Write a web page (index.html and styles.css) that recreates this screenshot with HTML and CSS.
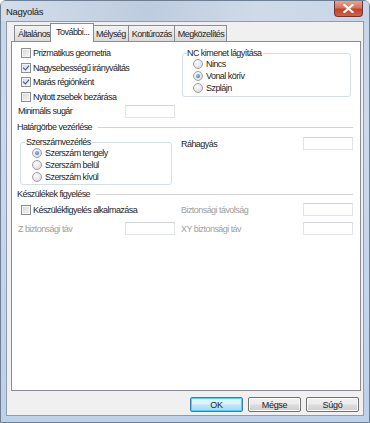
FILE: index.html
```html
<!DOCTYPE html>
<html lang="hu">
<head>
  <meta charset="UTF-8" />
  <title>Nagyolás</title>
  <link rel="stylesheet" href="styles.css">
</head>
<body>
  <div class="window">
    <div class="titlebar">
      <span class="title">Nagyolás</span>
      <div class="close">
        <svg width="11" height="9" viewBox="0 0 11 9">
          <path d="M1.5 1 L9.5 8 M9.5 1 L1.5 8" stroke="#fff" stroke-width="2.2" stroke-linecap="square"/>
        </svg>
      </div>
    </div>

    <div class="client">
      <!-- Tabs -->
      <div class="tabs">
        <div class="tab">Általános</div>
        <div class="tab active">További...</div>
        <div class="tab">Mélység</div>
        <div class="tab">Kontúrozás</div>
        <div class="tab">Megközelítés</div>
      </div>

      <div class="panel">
        <div class="section top">
          <div class="col">
            <label class="check"><span class="cb"></span>Prizmatikus geometria</label>
            <label class="check"><span class="cb on"></span>Nagysebességű irányváltás</label>
            <label class="check"><span class="cb on"></span>Marás régiónként</label>
            <label class="check"><span class="cb"></span>Nyitott zsebek bezárása</label>
            <div class="field"><span>Minimális sugár</span><span class="input"></span></div>
          </div>
          <fieldset class="group nc">
            <legend>NC kimenet lágyítása</legend>
            <label class="radio"><span class="rb"></span>Nincs</label>
            <label class="radio"><span class="rb on"></span>Vonal körív</label>
            <label class="radio"><span class="rb"></span>Szplájn</label>
          </fieldset>
        </div>

        <div class="sep"><span>Határgörbe vezérlése</span></div>

        <div class="section mid">
          <fieldset class="group tool">
            <legend>Szerszámvezérlés</legend>
            <label class="radio"><span class="rb on"></span>Szerszám tengely</label>
            <label class="radio"><span class="rb"></span>Szerszám belül</label>
            <label class="radio"><span class="rb"></span>Szerszám kívül</label>
          </fieldset>
          <div class="field right"><span>Ráhagyás</span><span class="input"></span></div>
        </div>

        <div class="sep"><span>Készülékek figyelése</span></div>

        <div class="section fix">
          <label class="check"><span class="cb"></span>Készülékfigyelés alkalmazása</label>
          <div class="field right off"><span>Biztonsági távolság</span><span class="input"></span></div>
          <div class="field off"><span>Z biztonsági táv</span><span class="input"></span></div>
          <div class="field right off"><span>XY biztonsági táv</span><span class="input"></span></div>
        </div>
      </div>

      <div class="buttons">
        <button class="default">OK</button>
        <button>Mégse</button>
        <button>Súgó</button>
      </div>
    </div>
  </div>
</body>
</html>
```

FILE: styles.css
```css
body {
  margin: 0;
  font-family: "Liberation Sans", Arial, sans-serif;
  font-size: 9px;
  letter-spacing: -0.55px;
  color: #262626;
}

.window {
  width: 370px;
  height: 423px;
  box-sizing: border-box;
  padding: 20px 5px 6px 5px;
  background: linear-gradient(to bottom, #c6d4e6 0%, #cad9ec 30%, #bcd1ea 100%);
  border: 1px solid #6f7f93;
  border-radius: 6px 6px 0 0;
  position: relative;
}

.titlebar {
  position: absolute;
  top: 0;
  left: 0;
  right: 0;
  height: 20px;
  background: linear-gradient(90deg, rgba(220,228,238,0.6), rgba(180,196,216,0.5) 40%, rgba(214,222,234,0.6) 70%, rgba(200,214,232,0.6));
}

.title {
  position: absolute;
  left: 5px;
  top: 5px;
  font-size: 9.5px;
  letter-spacing: -0.3px;
  color: #1a1a1a;
}

.close {
  position: absolute;
  right: 6px;
  top: 0;
  width: 29px;
  height: 16px;
  border: 1px solid #6b3a38;
  border-top: none;
  border-radius: 0 0 4px 4px;
  background: linear-gradient(to bottom, #e8a493 0%, #d7735b 45%, #c2412a 55%, #d0634a 100%);
  display: flex;
  align-items: center;
  justify-content: center;
  box-sizing: border-box;
}

.client {
  height: 100%;
  box-sizing: border-box;
  background: #f0f0f0;
  border: 1px solid #8e9cae;
  display: flex;
  flex-direction: column;
}

/* tabs */
.tabs {
  display: flex;
  height: 18px;
  margin-top: 1px;
  padding-left: 7px;
  position: relative;
  z-index: 1;
}

.tab {
  margin-top: 2px;
  height: 16px;
  box-sizing: border-box;
  padding: 3px 2px 0 3px;
  border: 1px solid #898c95;
  border-bottom: none;
  border-right: none;
  background: linear-gradient(to bottom, #f3f3f3, #e6e6e6 50%, #dadada);
  white-space: nowrap;
}

.tab:last-child {
  border-right: 1px solid #898c95;
}

.tab.active {
  margin: 0 -2px -1px -2px;
  height: 19px;
  padding: 3px 4px 0 5px;
  background: #fff;
  border-right: 1px solid #898c95;
  position: relative;
  z-index: 2;
}

.tab.active + .tab {
  border-left: none;
  padding-left: 4px;
}

.panel {
  margin-left: 4px;
  width: 350px;
  height: 350px;
  box-sizing: border-box;
  background: #fff;
  border: 1px solid #898c95;
  padding: 4px 7px 0 6px;
}

.section {
  display: grid;
  grid-template-columns: 157px 172px;
  column-gap: 6px;
}

.col {
  display: flex;
  flex-direction: column;
}

.check {
  display: flex;
  align-items: center;
  height: 14.6px;
  margin-left: 3px;
}

.cb {
  width: 8px;
  height: 8px;
  margin-right: 2px;
  border: 1px solid #8f8f8f;
  background: linear-gradient(135deg, #d8d8d8, #f6f6f6);
  box-shadow: inset 0 0 0 1px #f4f4f4;
  position: relative;
}

.cb.on::after {
  content: "";
  position: absolute;
  left: 2px;
  top: 0px;
  width: 3px;
  height: 5px;
  border: solid #3a4f8e;
  border-width: 0 1.6px 1.6px 0;
  transform: rotate(40deg);
}

.field {
  display: flex;
  align-items: center;
  justify-content: space-between;
  height: 14px;
}

.field.off {
  color: #a0a0a0;
}

.input {
  width: 50px;
  height: 13px;
  box-sizing: border-box;
  border: 1px solid #e0e3e7;
  border-top-color: #cfd3d8;
  background: #fff;
}

.group {
  margin: 0;
  padding: 0 4px 1px 10px;
  min-width: 0;
  border: 1px solid #d5dfe5;
  border-radius: 3px;
}

.group legend {
  padding: 0 1px;
  margin-left: -7px;
  line-height: 10px;
}

.radio {
  display: flex;
  align-items: center;
  height: 12px;
}

.rb {
  width: 8px;
  height: 8px;
  margin-right: 3px;
  border-radius: 50%;
  border: 1px solid #a0a0a0;
  background: radial-gradient(circle at 40% 35%, #fbfbfb, #d6d6d6);
  position: relative;
}

.rb.on::after {
  content: "";
  position: absolute;
  left: 2px;
  top: 2px;
  width: 4px;
  height: 4px;
  border-radius: 50%;
  background: radial-gradient(circle at 40% 35%, #9ec4f2, #2a5fb5);
}

.top .nc {
  margin: 2px 2px 0 1px;
  align-self: start;
  padding-bottom: 2px;
}

.sep {
  display: flex;
  align-items: center;
  height: 10px;
  margin: 4px 0 0 -1px;
}

.sep::after {
  content: "";
  flex: 1;
  height: 1px;
  background: #d3d3d3;
  margin-left: 6px;
}

.mid {
  margin-top: 5px;
}

.mid .tool {
  margin: 0 3px 0 2px;
  padding-left: 11px;
}

.mid .right {
  align-self: start;
  height: 13px;
}

.fix {
  margin-top: 4px;
  row-gap: 6px;
}

.fix .check {
  height: 13px;
}

.fix .field {
  height: 13px;
}

.buttons {
  display: flex;
  justify-content: flex-end;
  gap: 5px;
  margin-top: 6px;
  padding-right: 4px;
}

button {
  width: 53px;
  height: 15px;
  padding: 0;
  font-family: inherit;
  font-size: 9px;
  letter-spacing: -0.3px;
  color: #1e1e1e;
  border: 1px solid #707070;
  border-radius: 2px;
  background: linear-gradient(to bottom, #f2f2f2 0%, #ebebeb 48%, #dddddd 52%, #cfcfcf 100%);
  box-shadow: inset 0 0 0 1px #fbfbfb;
}

button.default {
  border-color: #3c7fb1;
  box-shadow: inset 0 0 0 1px #48d2fb;
  background: linear-gradient(to bottom, #eaf6fd 0%, #d9f0fc 48%, #bee6fd 52%, #a7d9f5 100%);
}
```
